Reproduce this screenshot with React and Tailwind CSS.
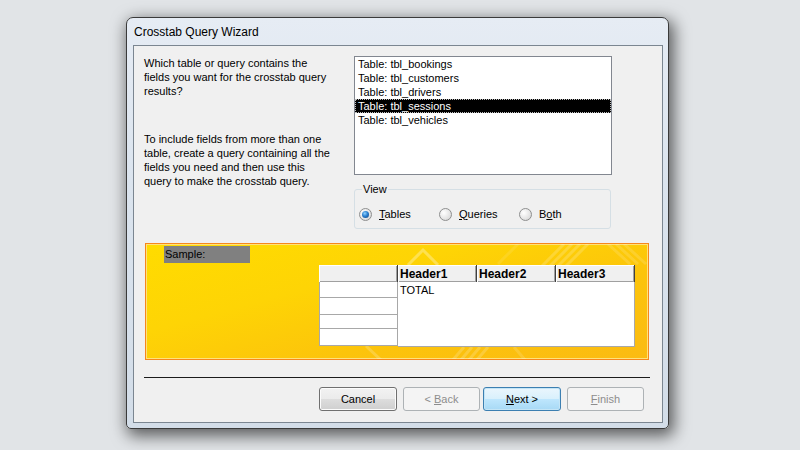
import React from "react";

const font = "font-['Liberation_Sans',Arial,sans-serif]";

const tables = [
  "Table: tbl_bookings",
  "Table: tbl_customers",
  "Table: tbl_drivers",
  "Table: tbl_sessions",
  "Table: tbl_vehicles",
];

const Radio = ({ checked, label, keyIndex }) => (
  <div className="flex items-center gap-[7px] w-[80px]">
    <div className="w-[13px] h-[13px] rounded-full border border-[#8e8f8f] bg-[radial-gradient(circle_at_35%_35%,#ffffff_0%,#e6e6e6_55%,#cfcfcf_100%)] flex items-center justify-center">
      {checked && (
        <div className="w-[7px] h-[7px] rounded-full bg-[radial-gradient(circle_at_40%_35%,#8fd3ff_0%,#2a7fcf_45%,#0d3f7a_100%)]" />
      )}
    </div>
    <span className="text-[11px] leading-[13px] text-black">
      {label.slice(0, keyIndex)}
      <span className="underline">{label[keyIndex]}</span>
      {label.slice(keyIndex + 1)}
    </span>
  </div>
);

const WinButton = ({ children, width, disabled, focused }) => (
  <div
    className={`${width} h-[24px] rounded-[3px] border flex items-center justify-center text-[11px] ${
      disabled
        ? "border-[#adb2b5] bg-[#f4f4f4] text-[#8d8d8d]"
        : focused
        ? "border-[#3c7fb1] bg-[linear-gradient(#eaf6fd_0%,#d9f0fc_50%,#bee6fd_51%,#a7d9f5_100%)] shadow-[inset_0_0_0_1px_#c4e5f6] text-black"
        : "border-[#707070] bg-[linear-gradient(#f2f2f2_0%,#ebebeb_50%,#dddddd_51%,#cfcfcf_100%)] shadow-[inset_0_0_0_1px_#fcfcfc] text-black"
    }`}
  >
    {children}
  </div>
);

const headerCell =
  "h-[17px] bg-[#f0f0f0] border-r border-r-[#404040] shadow-[inset_1px_1px_0_#ffffff,inset_-1px_-1px_0_#a0a0a0] flex items-center pl-[2px]";

export default function App() {
  return (
    <div className={`w-[800px] h-[450px] bg-[#e1e4e7] pt-[17px] pl-[126px] ${font}`}>
      {/* Window */}
      <div className="w-[543px] h-[412px] rounded-t-[7px] rounded-b-[5px] border border-[#3a3a3a] bg-[linear-gradient(#e6ecf4_0%,#dbe4ee_40%,#d3dde8_100%)] shadow-[3px_5px_16px_2px_rgba(0,0,0,0.6)]">
        {/* Title bar */}
        <div className="h-[27px] flex items-center pl-[7px] text-[12px] text-black">
          Crosstab Query Wizard
        </div>

        {/* Client area */}
        <div className="ml-[6px] w-[530px] h-[378px] border border-[#7b8691] bg-[#f0f0f0] text-[11px] text-black">
          {/* Top section */}
          <div className="flex pt-[10px] pl-[10px] gap-[10px]">
            <div className="w-[200px] leading-[14px] whitespace-nowrap">
              <div>Which table or query contains the</div>
              <div>fields you want for the crosstab query</div>
              <div>results?</div>
              <div className="mt-[34px]">
                <div>To include fields from more than one</div>
                <div>table, create a query containing all the</div>
                <div>fields you need and then use this</div>
                <div>query to make the crosstab query.</div>
              </div>
            </div>

            <div className="w-[258px]">
              {/* List box */}
              <div className="h-[119px] border border-[#828790] bg-white">
                {tables.map((t) => (
                  <div
                    key={t}
                    className={
                      t === "Table: tbl_sessions"
                        ? "h-[14px] leading-[12px] bg-black text-white border border-dotted border-[#bdbdbd] pl-[2px]"
                        : "h-[14px] leading-[14px] pl-[3px]"
                    }
                  >
                    {t}
                  </div>
                ))}
              </div>

              {/* View group */}
              <div className="relative mt-[14px] w-[257px] h-[40px] rounded-[3px] border border-[#d5dfe5] pt-[10px] pl-[4px] flex">
                <span className="absolute left-[7px] top-[-8px] bg-[#f0f0f0] px-[1px] leading-[14px]">
                  View
                </span>
                <Radio checked label="Tables" keyIndex={0} />
                <Radio label="Queries" keyIndex={0} />
                <Radio label="Both" keyIndex={1} />
              </div>
            </div>
          </div>

          {/* Sample panel */}
          <div className="relative mt-[14px] ml-[11px] w-[504px] h-[117px] border border-[#f7861c] shadow-[inset_0_0_0_1px_#ffe27a] bg-[linear-gradient(165deg,#ffdc00_0%,#fed405_35%,#fcc40b_65%,#fbbb12_100%)] overflow-hidden">
            <svg className="absolute inset-0" width="504" height="117" viewBox="0 0 504 117">
              <g stroke="#ffffff" strokeOpacity="0.18" strokeWidth="3" fill="none">
                <path d="M262 21 L277 6 L292 21" strokeOpacity="0.3" />
                <path d="M352 20 L372 0" strokeOpacity="0.1" />
                <path d="M396 22 L418 0" />
                <path d="M404 22 L426 0" />
                <path d="M412 22 L434 0" />
                <path d="M420 22 L442 0" />
                <path d="M462 0 L484 20" strokeOpacity="0.14" />
                <path d="M470 0 L492 20" strokeOpacity="0.14" />
                <path d="M478 0 L500 20" strokeOpacity="0.14" />
                <path d="M306 117 L318 103" />
                <path d="M314 117 L326 103" />
                <path d="M322 117 L334 103" />
                <path d="M330 117 L342 103" />
                <path d="M368 103 L380 117" strokeOpacity="0.14" />
                <path d="M220 102 L236 117" strokeOpacity="0.2" />
              </g>
            </svg>

            <div className="relative pt-[2px] pl-[18px]">
              <div className="w-[86px] h-[17px] bg-[#808080] leading-[17px] pl-[1px]">Sample:</div>
              <div className="flex mt-[2px] ml-[155px]">
                {/* Row headers */}
                <div className="w-[79px]">
                  <div className={headerCell} />
                  <div className="bg-white border-l border-r border-b border-[#a8a8a8]">
                    <div className="h-[16px] border-b border-[#a8a8a8]" />
                    <div className="h-[17px] border-b border-[#a8a8a8]" />
                    <div className="h-[14px] border-b border-[#a8a8a8]" />
                    <div className="h-[16px]" />
                  </div>
                </div>
                {/* Data columns */}
                <div className="w-[237px]">
                  <div className="flex font-bold text-[12px]">
                    <div className={`w-[79px] ${headerCell}`}>Header1</div>
                    <div className={`w-[79px] ${headerCell}`}>Header2</div>
                    <div className={`w-[79px] ${headerCell}`}>Header3</div>
                  </div>
                  <div className="h-[65px] bg-white border-r border-b border-[#a8a8a8] pl-[2px] pt-[2px] leading-[13px]">
                    TOTAL
                  </div>
                </div>
              </div>
            </div>
          </div>

          {/* Separator */}
          <div className="mt-[17px] ml-[10px] w-[506px] h-px bg-[#1c1c1c]" />

          {/* Buttons */}
          <div className="flex mt-[9px] ml-[185px]">
            <WinButton width="w-[78px]">Cancel</WinButton>
            <div className="ml-[6px]">
              <WinButton width="w-[77px]" disabled>
                &lt; <span className="underline ml-[3px]">B</span>ack
              </WinButton>
            </div>
            <div className="ml-[3px]">
              <WinButton width="w-[78px]" focused>
                <span className="underline">N</span>ext &gt;
              </WinButton>
            </div>
            <div className="ml-[6px]">
              <WinButton width="w-[77px]" disabled>
                <span className="underline">F</span>inish
              </WinButton>
            </div>
          </div>
        </div>
      </div>
    </div>
  );
}
